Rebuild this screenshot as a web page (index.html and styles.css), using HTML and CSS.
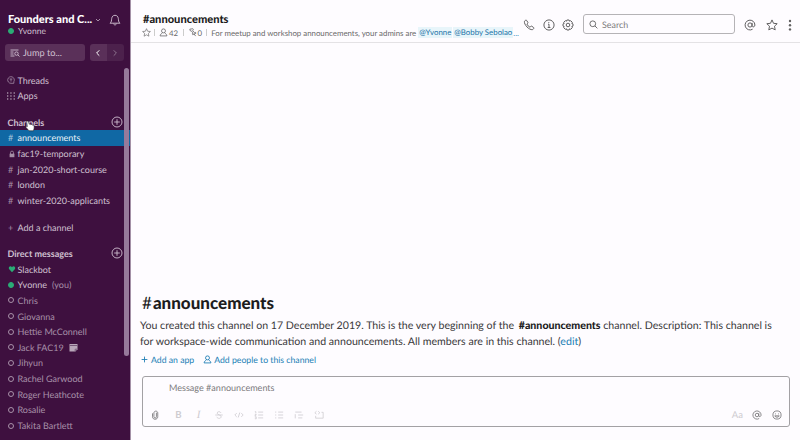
FILE: index.html
```html
<!DOCTYPE html>
<html lang="en">
<head>
<meta charset="utf-8">
<title>announcements</title>
<link rel="stylesheet" href="styles.css">
</head>
<body>
<svg class="defs" width="0" height="0">
  <symbol id="plus" viewBox="0 0 12 12"><circle cx="6" cy="6" r="5"/><path d="M6 3.2v5.6M3.2 6h5.6"/></symbol>
  <symbol id="person" viewBox="0 0 10 10"><circle cx="5" cy="3.2" r="2.2"/><path d="M3.7 5.3C3.5 6.5 1.2 6.4 1.2 8.8h7.6C8.8 6.4 6.5 6.5 6.3 5.3"/></symbol>
  <symbol id="star" viewBox="0 0 12 12"><path d="M6 .9l1.5 3.4 3.7.4-2.7 2.5.7 3.7L6 9.1l-3.2 1.8.7-3.7L.8 4.7l3.7-.4z"/></symbol>
  <symbol id="at" viewBox="0 0 12 12"><circle cx="6" cy="6" r="2.1"/><path d="M8.1 3.9v2.8c0 1.8 2.8 1.6 2.8-.7A4.9 4.9 0 1 0 8.6 10.2"/></symbol>
</svg>
<div class="app">
  <aside class="sidebar">
    <div class="team">
      <h1>Founders and C...</h1>
      <svg class="chev" viewBox="0 0 6 4"><path d="M1 1l2 2 2-2"/></svg>
      <svg class="bell" viewBox="0 0 12 12"><path d="M1 9.2c1.7-1.1 1.4-3 1.7-4.7C3 2.5 4.1 1.3 6 1.3s3 1.2 3.3 3.2c.3 1.7 0 3.6 1.7 4.7zM4.7 9.5c.2 2 2.4 2 2.6 0"/></svg>
    </div>
    <div class="me"><i class="on"></i>Yvonne</div>
    <div class="jump">
      <div class="jumpbox"><svg viewBox="0 0 10 8"><path d="M.5 1h8M.5 3h3M.5 5h3M.5 7h4"/><circle cx="6.5" cy="4.6" r="1.7"/><path d="M7.8 5.8l1.7 1.7"/></svg>Jump to...</div>
      <div class="nav"><span><svg viewBox="0 0 6 8"><path d="M4.3 1.3L1.6 4l2.7 2.7"/></svg></span><span class="off"><svg viewBox="0 0 6 8"><path d="M1.7 1.3L4.4 4 1.7 6.7"/></svg></span></div>
    </div>
    <ul class="list top">
      <li><b><svg viewBox="0 0 8 8"><path d="M6.8 7.3H4a3.3 3.3 0 1 1 2.9-1.7zM2.6 3h2.8M4 3v2.5"/></svg></b>Threads</li>
      <li><b><svg class="dots" viewBox="0 0 8 8"><path d="M0 1h8M0 4h8M0 7h8"/></svg></b>Apps</li>
    </ul>
    <div class="head">Channels<svg><use href="#plus"/></svg></div>
    <ul class="list">
      <li class="active"><b>#</b>announcements</li>
      <li><b><svg class="lock" viewBox="0 0 8 8"><path d="M2.5 4V2.6a1.5 1.5 0 0 1 3 0V4"/><rect x="1.6" y="3.7" width="4.8" height="3.5"/></svg></b>fac19-temporary</li>
      <li><b>#</b>jan-2020-short-course</li>
      <li><b>#</b>london</li>
      <li><b>#</b>winter-2020-applicants</li>
    </ul>
    <ul class="list add"><li><b>+</b>Add a channel</li></ul>
    <div class="head dm">Direct messages<svg><use href="#plus"/></svg></div>
    <ul class="list people">
      <li class="lit"><b><svg class="heart" viewBox="0 0 8 8"><path d="M4 7.2L1 4C0 2 2.7.2 4 2.2 5.3.2 8 2 7 4z"/></svg></b>Slackbot</li>
      <li class="lit"><b><i class="on"></i></b>Yvonne<em>(you)</em></li>
      <li><b><i></i></b>Chris</li>
      <li><b><i></i></b>Giovanna</li>
      <li><b><i></i></b>Hettie McConnell</li>
      <li><b><i></i></b>Jack FAC19<svg class="cal" viewBox="0 0 9 9"><path class="page" d="M.5 1h8v5.3L6.3 8.5H.5z"/><path d="M.5 2.5h8M6.2 8.5V6.2h2.3"/></svg></li>
      <li><b><i></i></b>Jihyun</li>
      <li><b><i></i></b>Rachel Garwood</li>
      <li><b><i></i></b>Roger Heathcote</li>
      <li><b><i></i></b>Rosalie</li>
      <li><b><i></i></b>Takita Bartlett</li>
    </ul>
    <div class="scroll"></div>
    <svg class="hand" viewBox="0 0 10 12"><path d="M2 1.3c.8-.9 1.5 0 1.7 1l.5 2c.8-.6 1.3-.2 1.5.3.8-.5 1.4 0 1.6.5 1-.4 1.7.2 1.8 1.2l.1 1.7-.7 2.8H4L1 7.4c-.5-1 .4-1.6 1.3-.8L1.8 2.5z"/></svg>
  </aside>
  <main>
    <header>
      <div class="info">
        <h2>#announcements</h2>
        <div class="topic">
          <svg class="s"><use href="#star"/></svg><u></u>
          <svg class="p"><use href="#person"/></svg><span class="n42">42</span><u></u>
          <svg class="pin" viewBox="0 0 10 10"><path d="M2 1.3l3.4-.5.6 1-.8 1 2 2.3 1.3-.2.3 1-3.6 1.5-.4-.9.7-1-1.7-2.2-1.4-.3zM6.5 6.3L8.5 9"/></svg><span class="n0">0</span><u></u>
          <span class="txt">For meetup and workshop announcements, your admins are</span>
          <mark>@Yvonne</mark><mark class="last">@Bobby Sebolao</mark><span class="more">...</span>
        </div>
      </div>
      <div class="tools">
        <svg viewBox="0 0 12 12"><path d="M2.7 1.2L1.4 2.3C1 5.8 5.9 11 9.6 10.7l1.2-1.3c.2-.4.1-.7-.2-.9L8.7 7.2c-.4-.2-.7-.1-1 .2l-.6.8C5.8 7.7 4.4 6.3 3.9 5l.8-.7c.3-.3.3-.6.1-1L3.6 1.4c-.2-.3-.6-.4-.9-.2z"/></svg>
        <svg viewBox="0 0 12 12"><circle cx="6" cy="6" r="5.1"/><path d="M5 5.2h1v3.3M4.7 8.5h2.7M5.8 3v.9"/></svg>
        <svg viewBox="0 0 12 12"><circle cx="6" cy="6" r="1.8"/><path d="M4.9 1h2.2l.4 1.2 1.2-.5 1.6 1.6-.5 1.2 1.2.4v2.2l-1.2.4.5 1.2-1.6 1.6-1.2-.5L7.1 11H4.9l-.4-1.2-1.2.5-1.6-1.6.5-1.2L1 7.1V4.9l1.2-.4-.5-1.2 1.6-1.6 1.2.5z"/></svg>
      </div>
      <div class="search"><svg viewBox="0 0 10 10"><circle cx="4.2" cy="4.2" r="3.2"/><path d="M6.6 6.6l2.7 2.7"/></svg>Search</div>
      <div class="right">
        <svg><use href="#at"/></svg>
        <svg><use href="#star"/></svg>
        <svg class="kebab" viewBox="0 0 4 12"><circle cx="2" cy="2" r="1.2"/><circle cx="2" cy="6.2" r="1.2"/><circle cx="2" cy="10.4" r="1.2"/></svg>
      </div>
    </header>
    <section class="intro">
      <h3><span>#</span>announcements</h3>
      <p class="l1">You created this channel on 17 December 2019. This is the very beginning of the <strong>#announcements</strong> channel. Description: This channel is</p>
      <p class="l2">for workspace-wide communication and announcements. All members are in this channel. (<a>edit</a>)</p>
      <div class="actions"><svg viewBox="0 0 10 10"><path d="M5 1.8v6.4M1.8 5h6.4"/></svg><span class="addapp">Add an app</span><svg><use href="#person"/></svg><span>Add people to this channel</span></div>
    </section>
    <div class="composer">
      <div class="ph">Message #announcements</div>
      <div class="bar">
        <svg class="dark" viewBox="0 0 12 12"><path d="M7.7 3.2v4.9c0 2.1-3 2.1-3 0V3.6C4.7.6 9.3.6 9.3 3.6v4.5c0 4-6.3 4-6.3 0V4"/></svg>
        <span class="fmt bold">B</span><span class="fmt italic">I</span>
        <svg viewBox="0 0 12 12"><path d="M8.5 3.5C7.5 1.3 3.7 1.6 3.8 3.8 3.9 6 8.7 5.7 8.6 8.2 8.4 10.7 4 10.6 3.3 8.2M1.5 6h9"/></svg>
        <svg viewBox="0 0 12 12"><path d="M3.3 3.7L1 6l2.3 2.3M8.7 3.7L11 6 8.7 8.3M7 3L5 9"/></svg>
        <svg viewBox="0 0 12 12"><path d="M5 2.5h6M5 6h6M5 9.5h6M1 2h1.2v2M1 5.3h1.7L1 7.2h1.8M1 8.5h1.7v2H1"/></svg>
        <svg viewBox="0 0 12 12"><path d="M5 2.5h6M5 6h6M5 9.5h6M1.3 2.5h1.4M1.3 6h1.4M1.3 9.5h1.4"/></svg>
        <svg viewBox="0 0 12 12"><path d="M1.5 2.5H9M5 6h6M5 9.5h5M1.5 5v5"/></svg>
        <svg viewBox="0 0 12 12"><path d="M3 1.5L1 3.3 3 5M5 1.5l2 1.8L5 5M9 2.8h2v7H2V7"/></svg>
        <span class="aa">Aa</span>
        <svg class="dark"><use href="#at"/></svg>
        <svg class="dark smile" viewBox="0 0 12 12"><circle cx="6" cy="6" r="4.9"/><path d="M4.2 4.2v1M7.8 4.2v1M3.3 7c.8 2.2 4.6 2.2 5.4 0z"/></svg>
      </div>
    </div>
  </main>
</div>
</body>
</html>
```
FILE: styles.css
```css
* { box-sizing: border-box; margin: 0; padding: 0; }
body { width: 800px; height: 440px; overflow: hidden; font-family: Lato, sans-serif; font-size: 9px; background: #fefcff; text-rendering: geometricPrecision; }
svg { fill: none; stroke: currentColor; stroke-width: 1; flex: none; }
symbol { overflow: visible; }
.defs { position: absolute; }
ul { list-style: none; }
.app { display: flex; height: 440px; }
.sidebar { position: relative; width: 130px; flex: none; background: #3e103f; color: #d0c0d1; padding-top: 11.5px; overflow: hidden; }
.team { display: flex; align-items: center; height: 16px; padding-left: 8px; color: #fff; }
.team h1 { font-size: 11px; font-weight: 900; line-height: 16px; width: 86px; white-space: nowrap; }
.chev { width: 6px; height: 4px; margin-left: 1px; color: #a58ea6; }
.bell { width: 12px; height: 12px; margin-left: 8px; color: #c5b3c6; }
.me { display: flex; align-items: center; height: 10px; padding-left: 7px; font-size: 8.5px; margin-top: -1.5px; }
.me i { margin-right: 4px; }
i { display: block; width: 6px; height: 6px; margin-left: 1px; border: 1px solid #a891a9; border-radius: 50%; }
i.on { background: #2bac76; border-color: #2bac76; }
.jump { display: flex; gap: 5px; margin: 8px 0 0 5px; height: 17px; }
.jumpbox { width: 80px; background: #5a3059; border-radius: 3px; display: flex; align-items: center; padding-left: 5px; font-size: 9.2px; }
.jumpbox svg { width: 10px; height: 8px; margin-right: 3px; stroke-width: .9; }
.nav { display: flex; width: 34px; }
.nav span { width: 17px; background: #5a3059; display: flex; align-items: center; justify-content: center; border-radius: 3px 0 0 3px; color: #fff; }
.nav .off { background: #4c214c; color: #8d738e; border-radius: 0 3px 3px 0; }
.nav svg { width: 6px; height: 8px; margin-right: 1px; }
.list li { height: 15.65px; display: flex; align-items: center; padding-left: 7px; white-space: nowrap; }
.list b { width: 10.5px; flex: none; display: flex; align-items: center; font-weight: 400; color: #a58ea6; text-indent: 1px; }
.list b svg { width: 8px; height: 8px; stroke-width: .8; }
.list b .dots { stroke-dasharray: 1.3 2; stroke-width: 1.3; }
.list b .lock, .list b .heart { margin-left: .5px; }
.lock rect { fill: currentColor; stroke: none; }
.top { margin-top: 11.4px; }
.head { display: flex; justify-content: space-between; align-items: center; height: 16px; padding: 0 7px 0 7.5px; margin-top: 10.4px; font-weight: 700; }
.head svg { width: 12px; height: 12px; stroke-width: .9; }
.list .active { background: #1068a4; color: #e9f2f8; }
.active b { color: #a5c7df; }
.add { margin-top: 11px; }
.dm { margin-top: 10.4px; }
.people li { color: #a891a9; }
.people .lit { color: #d0c0d1; }
.people .heart { fill: #2bac76; stroke: none; }
em { font-style: normal; color: #a891a9; margin-left: 5px; }
.cal { width: 9px; height: 9px; margin-left: 5px; color: #765979; }
.cal .page { fill: #b8a6b9; stroke: none; }
.scroll { position: absolute; left: 124px; top: 68px; width: 5px; height: 288px; border-radius: 3px; background: #967a9b; }
.hand { position: absolute; left: 25px; top: 120px; width: 10px; height: 12px; fill: #fff; stroke: #222; stroke-width: .6; }
main { flex: 1; border-left: 1px solid #a491a7; display: flex; flex-direction: column; min-width: 0; }
header { height: 43px; border-bottom: 1px solid #e4e2e5; display: flex; flex: none; color: #616061; }
.info { width: 389px; padding: 12px 0 0 12px; white-space: nowrap; }
h2 { font-size: 11.1px; line-height: 16px; font-weight: 900; color: #1d1c1d; }
.topic { display: flex; align-items: center; height: 12px; margin-top: -1.5px; font-size: 7.85px; color: #6a696a; }
.topic > * { flex: none; }
.topic u { width: 1px; height: 7px; background: #ccc; }
.topic svg { width: 9px; height: 9px; stroke-width: .9; }
.topic .s { margin: 0 3px 0 -1px; }
.topic .p { margin: 0 1px 0 4px; }
.topic .pin { margin: 0 1px 0 3.5px; }
.n42 { width: 14px; }
.n0 { width: 8px; }
.topic .txt { margin: 0 2px 0 4.7px; }
mark { background: #e8f5fa; color: #1d74a8; padding: 0 1px; margin-right: 1px; line-height: 11px; }
mark.last { margin-right: 0; }
.tools { display: flex; gap: 7.5px; padding: 18.5px 0 0 3px; width: 63px; }
.tools svg, .right svg { width: 12px; height: 12px; }
.search { width: 152px; height: 20px; margin-top: 14px; border: 1px solid #b5b3b6; border-radius: 3px; display: flex; align-items: center; padding-left: 5px; gap: 4px; font-size: 8.9px; color: #7c7a7c; }
.search svg { width: 9px; height: 9px; color: #616061; }
.right { display: flex; gap: 10px; padding: 18.5px 0 0 9px; }
.right .kebab { width: 4px; fill: currentColor; stroke: none; }
.intro { margin-top: auto; padding: 0 0 0 9px; color: #3a393b; font-size: 10.62px; white-space: nowrap; }
h3 { font-size: 17px; line-height: 22px; font-weight: 900; color: #1d1c1d; padding-left: 2px; margin-bottom: 5px; }
h3 span { font-weight: 400; margin-right: 1px; }
.intro p { line-height: 15.6px; }
.intro strong { font-weight: 900; color: #1d1c1d; margin-left: 2px; }
.intro a, .actions, .more { color: #2180b5; }
.actions { display: flex; align-items: center; font-size: 8.7px; height: 12px; margin-top: 2.7px; }
.actions svg { width: 9px; height: 9px; margin-right: 2px; }
.addapp { margin-right: 9px; }
.composer { flex: none; width: 648px; height: 51px; margin: 11px 0 13px 11px; border: 1px solid #a3a1a4; border-radius: 3px; display: flex; flex-direction: column; justify-content: space-between; }
.ph { padding: 4.4px 0 0 26px; line-height: 13px; font-size: 9.05px; color: #7c7a7d; }
.bar { display: flex; align-items: center; height: 22px; padding-left: 7px; color: #cfccd1; }
.bar svg { width: 10px; height: 10px; margin-right: 10px; }
.bar .dark { color: #757376; }
.fmt { width: 10px; margin-right: 10px; text-align: center; }
.bold { font-weight: 700; font-size: 9.6px; margin-left: 3.5px; }
.italic { font-style: italic; font-family: "Liberation Serif", serif; font-size: 11px; }
.aa { margin-left: auto; margin-right: 9px; font-size: 9.5px; }
.bar .smile { margin-right: 7px; }
```
